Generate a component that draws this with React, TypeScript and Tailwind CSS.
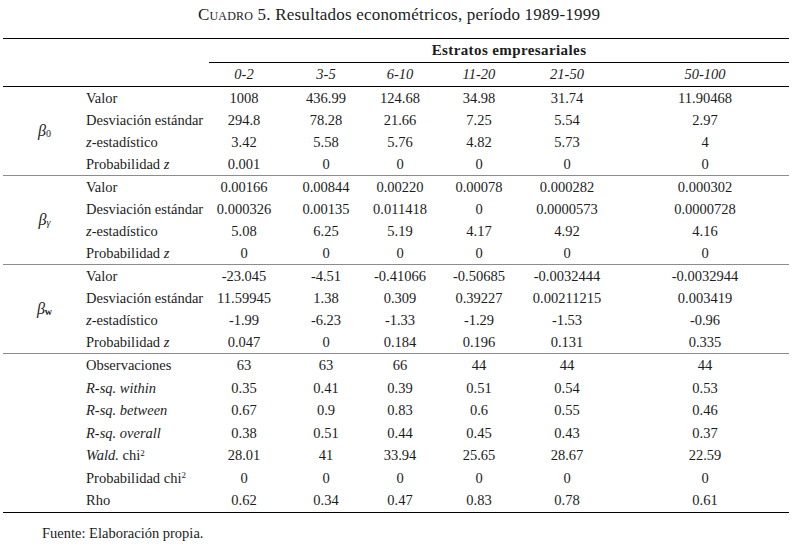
const cols = ['w-[70px]', 'w-[94px]', 'w-[54px]', 'w-[104px]', 'w-[72px]', 'w-[186px] pl-[18px]']

type Row = { label: React.ReactNode; values: string[] }

const Z = () => <i>z</i>

const groups: { beta: React.ReactNode; rows: Row[] }[] = [
  {
    beta: <>β<sub className="not-italic text-[10px]">0</sub></>,
    rows: [
      { label: 'Valor', values: ['1008', '436.99', '124.68', '34.98', '31.74', '11.90468'] },
      { label: 'Desviación estándar', values: ['294.8', '78.28', '21.66', '7.25', '5.54', '2.97'] },
      { label: <><Z />-estadístico</>, values: ['3.42', '5.58', '5.76', '4.82', '5.73', '4'] },
      { label: <>Probabilidad <Z /></>, values: ['0.001', '0', '0', '0', '0', '0'] },
    ],
  },
  {
    beta: <>β<sub className="text-[10px]">γ</sub></>,
    rows: [
      { label: 'Valor', values: ['0.00166', '0.00844', '0.00220', '0.00078', '0.000282', '0.000302'] },
      { label: 'Desviación estándar', values: ['0.000326', '0.00135', '0.011418', '0', '0.0000573', '0.0000728'] },
      { label: <><Z />-estadístico</>, values: ['5.08', '6.25', '5.19', '4.17', '4.92', '4.16'] },
      { label: <>Probabilidad <Z /></>, values: ['0', '0', '0', '0', '0', '0'] },
    ],
  },
  {
    beta: <>β<sub className="not-italic font-bold text-[10px]">w</sub></>,
    rows: [
      { label: 'Valor', values: ['-23.045', '-4.51', '-0.41066', '-0.50685', '-0.0032444', '-0.0032944'] },
      { label: 'Desviación estándar', values: ['11.59945', '1.38', '0.309', '0.39227', '0.00211215', '0.003419'] },
      { label: <><Z />-estadístico</>, values: ['-1.99', '-6.23', '-1.33', '-1.29', '-1.53', '-0.96'] },
      { label: <>Probabilidad <Z /></>, values: ['0.047', '0', '0.184', '0.196', '0.131', '0.335'] },
    ],
  },
]

const stats: Row[] = [
  { label: 'Observaciones', values: ['63', '63', '66', '44', '44', '44'] },
  { label: <i>R-sq. within</i>, values: ['0.35', '0.41', '0.39', '0.51', '0.54', '0.53'] },
  { label: <i>R-sq. between</i>, values: ['0.67', '0.9', '0.83', '0.6', '0.55', '0.46'] },
  { label: <i>R-sq. overall</i>, values: ['0.38', '0.51', '0.44', '0.45', '0.43', '0.37'] },
  { label: <><i>Wald.</i> chi<sup className="text-[9px]">2</sup></>, values: ['28.01', '41', '33.94', '25.65', '28.67', '22.59'] },
  { label: <>Probabilidad chi<sup className="text-[9px]">2</sup></>, values: ['0', '0', '0', '0', '0', '0'] },
  { label: 'Rho', values: ['0.62', '0.34', '0.47', '0.83', '0.78', '0.61'] },
]

function DataRow({ row, h }: { row: Row; h: string }) {
  return (
    <div className={`flex items-center ${h}`}>
      <div className="w-[123px] whitespace-nowrap">{row.label}</div>
      {row.values.map((v, i) => (
        <div key={i} className={`${cols[i]} text-center`}>{v}</div>
      ))}
    </div>
  )
}

export default function App() {
  return (
    <main className="w-[798px] h-[546px] bg-white text-[#1c1c1c] text-[14.5px] leading-none font-['Liberation_Serif','DejaVu_Serif',serif]">
      <h1 className="h-[28px] flex items-center justify-center text-[17px] tracking-[0.2px]">
        <span className="[font-variant:small-caps]">Cuadro 5.</span>&nbsp;Resultados econométricos, período 1989-1999
      </h1>

      <div className="ml-[3px] w-[786px] mt-[10px] border-t-[1.5px] border-black">
        {/* column group header */}
        <div className="h-[23px] flex items-center pl-[206px]">
          <div className="w-[580px] text-center pl-[20px] font-bold text-[15px] tracking-[0.4px]">Estratos empresariales</div>
        </div>
        <div className="ml-[206px] border-t-[1.5px] border-black" />
        <div className="h-[23px] flex items-center pl-[206px] italic">
          {['0-2', '3-5', '6-10', '11-20', '21-50', '50-100'].map((c, i) => (
            <div key={c} className={`${cols[i]} text-center`}>{c}</div>
          ))}
        </div>
        <div className="border-t-[1.5px] border-black" />

        {groups.map((g, gi) => (
          <div key={gi} className="flex border-b border-[#8c8c8c]">
            <div className="w-[83px] flex items-center justify-center italic text-[16px]">{g.beta}</div>
            <div className="flex flex-col">
              {g.rows.map((r, ri) => (
                <DataRow key={ri} row={r} h="h-[22px]" />
              ))}
            </div>
          </div>
        ))}

        <div className="flex border-b-[1.5px] border-black">
          <div className="w-[83px]" />
          <div className="flex flex-col">
            {stats.map((r, ri) => (
              <DataRow key={ri} row={r} h="h-[22.5px]" />
            ))}
          </div>
        </div>
      </div>

      <p className="mt-[13px] pl-[42px] text-[14.5px]">Fuente: Elaboración propia.</p>
    </main>
  )
}
